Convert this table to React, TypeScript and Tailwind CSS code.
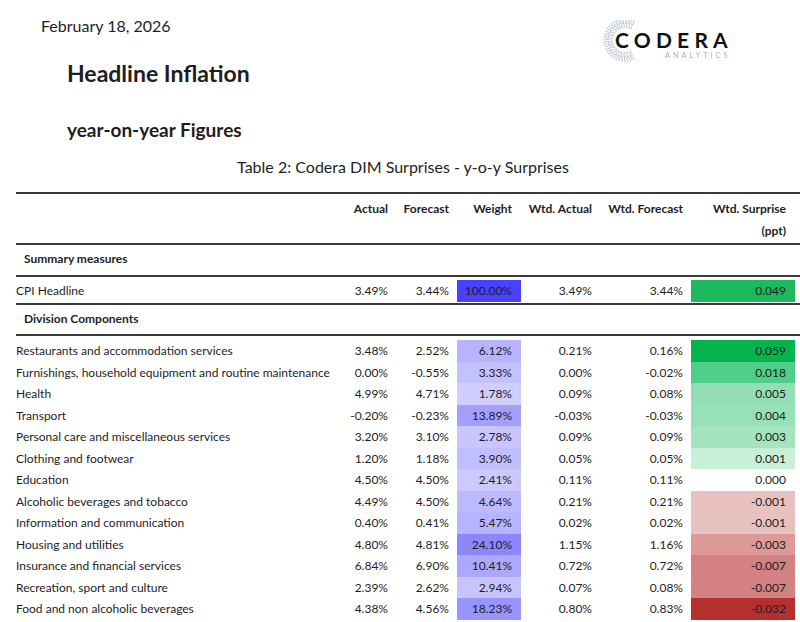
import React from "react";

type Row = [string, string, string, string, string, string, string, string, string];

const rows: Row[] = [
  ["Restaurants and accommodation services", "3.48%", "2.52%", "6.12%", "#b8b4ff", "0.21%", "0.16%", "0.059", "#05b44c"],
  ["Furnishings, household equipment and routine maintenance", "0.00%", "-0.55%", "3.33%", "#c4c1ff", "0.00%", "-0.02%", "0.018", "#50cd86"],
  ["Health", "4.99%", "4.71%", "1.78%", "#d0ceff", "0.09%", "0.08%", "0.005", "#93deb4"],
  ["Transport", "-0.20%", "-0.23%", "13.89%", "#a49eff", "-0.03%", "-0.03%", "0.004", "#98e0b7"],
  ["Personal care and miscellaneous services", "3.20%", "3.10%", "2.78%", "#c8c5ff", "0.09%", "0.09%", "0.003", "#a4e4be"],
  ["Clothing and footwear", "1.20%", "1.18%", "3.90%", "#c1beff", "0.05%", "0.05%", "0.001", "#c8efd8"],
  ["Education", "4.50%", "4.50%", "2.41%", "#cbc9ff", "0.11%", "0.11%", "0.000", "#ffffff"],
  ["Alcoholic beverages and tobacco", "4.49%", "4.50%", "4.64%", "#bdbaff", "0.21%", "0.21%", "-0.001", "#e8c1c1"],
  ["Information and communication", "0.40%", "0.41%", "5.47%", "#b8b5ff", "0.02%", "0.02%", "-0.001", "#e8c1c1"],
  ["Housing and utilities", "4.80%", "4.81%", "24.10%", "#8d87ff", "1.15%", "1.16%", "-0.003", "#de9999"],
  ["Insurance and financial services", "6.84%", "6.90%", "10.41%", "#aca7ff", "0.72%", "0.72%", "-0.007", "#d48181"],
  ["Recreation, sport and culture", "2.39%", "2.62%", "2.94%", "#c7c4ff", "0.07%", "0.08%", "-0.007", "#d48181"],
  ["Food and non alcoholic beverages", "4.38%", "4.56%", "18.23%", "#9a94ff", "0.80%", "0.83%", "-0.032", "#b52f2f"],
];

const grid = "grid grid-cols-[321px_59px_61px_64px_79px_91px_104px]";

function arc(cx: number, cy: number, r: number) {
  const a0 = (-62 * Math.PI) / 180;
  const a1 = (62 * Math.PI) / 180;
  const x0 = cx + r * Math.cos(a0);
  const y0 = cy + r * Math.sin(a0);
  const x1 = cx + r * Math.cos(a1);
  const y1 = cy + r * Math.sin(a1);
  return `M ${x0} ${y0} A ${r} ${r} 0 1 0 ${x1} ${y1}`;
}

function Logo() {
  const arcs = [
    { r: 13, c: "#9fd0d4" },
    { r: 15, c: "#e4a9b2" },
    { r: 17, c: "#b8b8c4" },
    { r: 19, c: "#98b8e0" },
    { r: 21, c: "#cfcfd6" },
  ];
  return (
    <div className="relative w-[130px] h-[42px]">
      <svg className="absolute left-0 top-0" width="40" height="42" viewBox="0 0 40 42">
        {arcs.map((a, i) => (
          <path
            key={i}
            d={arc(22, 20, a.r)}
            fill="none"
            stroke={a.c}
            strokeWidth={1.4}
            strokeDasharray={i % 2 ? "1.2 1.3" : "2 1"}
          />
        ))}
      </svg>
      <div className="absolute left-[12px] top-[9px] text-[21px] leading-none font-bold tracking-[5.2px] text-[#111]">
        CODERA
      </div>
      <div className="absolute left-[62px] top-[32px] text-[7.5px] leading-none tracking-[2.9px] bg-linear-to-r from-[#d9929a] to-[#8fb2e0] bg-clip-text text-transparent">
        ANALYTICS
      </div>
    </div>
  );
}

function Line() {
  return <div className="h-[2px] bg-[#3a3a3a]" />;
}

export default function App() {
  return (
    <div className="w-[800px] h-[622px] bg-white overflow-hidden font-['Lato',sans-serif] text-[#1e1e1e]">
      <div className="h-[59px] flex items-start">
        <div className="ml-[41px] mt-[16px] text-[16px] leading-[20px]">February 18, 2026</div>
        <div className="ml-auto mr-[67px] mt-[20px]">
          <Logo />
        </div>
      </div>
      <div className="pl-[67px] text-[23px] leading-[28px] font-bold">Headline Inflation</div>
      <div className="mt-[31px] pl-[67px] text-[19px] leading-[24px] font-bold">year-on-year Figures</div>
      <div className="mt-[15px] pl-[6px] text-center text-[16px] leading-[20px]">
        Table 2: Codera DIM Surprises - y-o-y Surprises
      </div>

      <div className="mt-[15px] ml-[16px] w-[784px] text-[12px]">
        <Line />
        <div className={`${grid} pt-[4px] pb-[1px] font-bold leading-[22px]`}>
          <div />
          <div className="text-right pr-[8px]">Actual</div>
          <div className="text-right pr-[8px]">Forecast</div>
          <div className="text-right pr-[9px]">Weight</div>
          <div className="text-right pr-[8px]">Wtd. Actual</div>
          <div className="text-right pr-[8px]">Wtd. Forecast</div>
          <div className="text-right pr-[9px]">
            <div>Wtd. Surprise</div>
            <div>(ppt)</div>
          </div>
        </div>
        <Line />
        <div className="pl-[8px] pt-[3px] pb-[5px] font-bold leading-[22px]">Summary measures</div>
        <Line />
        <div className={`${grid} pt-[3px] pb-[1px] leading-[22px]`}>
          <div>CPI Headline</div>
          <div className="text-right pr-[8px]">3.49%</div>
          <div className="text-right pr-[8px]">3.44%</div>
          <div className="text-right pr-[9px] bg-[#4a41ff]">100.00%</div>
          <div className="text-right pr-[8px]">3.49%</div>
          <div className="text-right pr-[8px]">3.44%</div>
          <div className="text-right pr-[9px] bg-[#1cb95d]">0.049</div>
        </div>
        <Line />
        <div className="pl-[8px] pt-[3px] pb-[4px] font-bold leading-[22px]">Division Components</div>
        <Line />
        <div className="pt-[4px]">
          {rows.map((r, i) => (
            <div key={i} className={`${grid} h-[21.5px] leading-[21.5px]`}>
              <div className="whitespace-nowrap">{r[0]}</div>
              <div className="text-right pr-[8px]">{r[1]}</div>
              <div className="text-right pr-[8px]">{r[2]}</div>
              <div className="text-right pr-[9px]" style={{ backgroundColor: r[4] }}>
                {r[3]}
              </div>
              <div className="text-right pr-[8px]">{r[5]}</div>
              <div className="text-right pr-[8px]">{r[6]}</div>
              <div className="text-right pr-[9px]" style={{ backgroundColor: r[8] }}>
                {r[7]}
              </div>
            </div>
          ))}
        </div>
      </div>
    </div>
  );
}
